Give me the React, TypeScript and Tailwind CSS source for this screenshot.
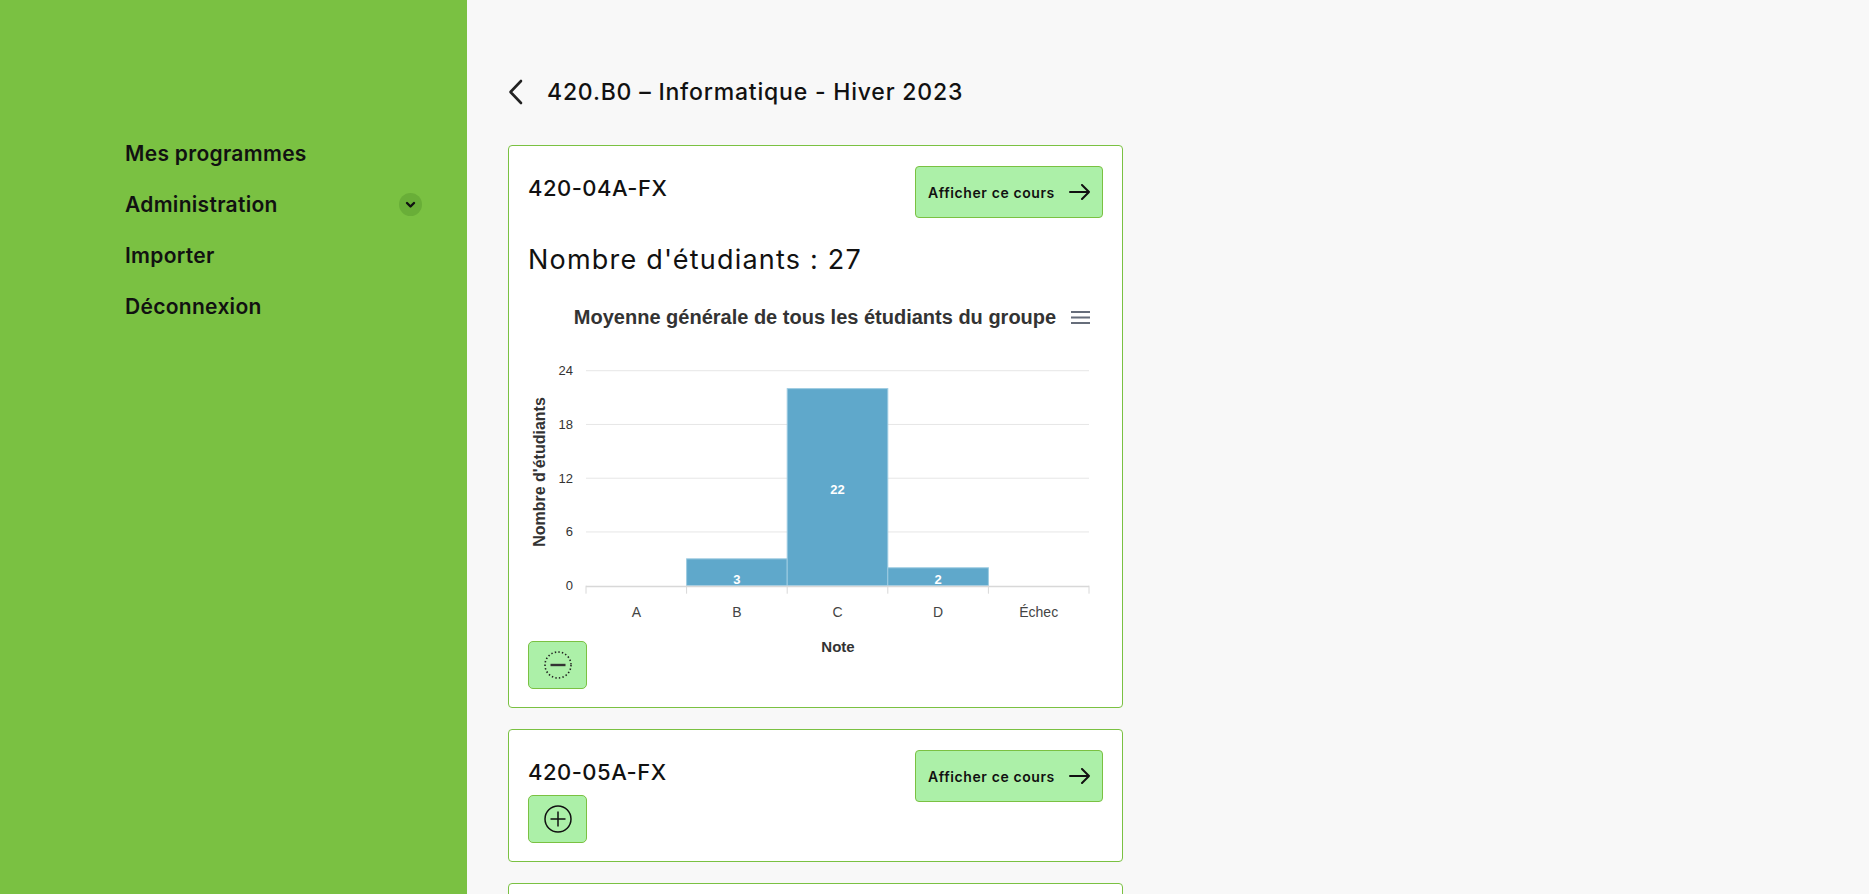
const navItems = [
  { label: "Mes programmes" },
  { label: "Administration", submenu: true },
  { label: "Importer" },
  { label: "Déconnexion" },
];

const grades = [
  { label: "A", value: 0 },
  { label: "B", value: 3 },
  { label: "C", value: 22 },
  { label: "D", value: 2 },
  { label: "Échec", value: 0 },
];

const ArrowRight = () => (
  <svg width="22" height="16" viewBox="0 0 22 16" fill="none" stroke="#111" strokeWidth="2" strokeLinecap="round" strokeLinejoin="round">
    <path d="M1 8h19M13 1l7 7-7 7" />
  </svg>
);

const ViewButton = () => (
  <button className="flex h-[52px] w-[188px] items-center justify-between rounded-[4px] border border-[#7ac142] bg-[#acf0a8] pl-[12px] pr-[11px] text-[14px] font-semibold tracking-[0.6px] text-[#111]">
    <span>Afficher ce cours</span>
    <ArrowRight />
  </button>
);

const ToggleButton = ({ open }: { open: boolean }) => (
  <button className="flex h-[48px] w-[59px] items-center justify-center rounded-[5px] border border-[#7ac142] bg-[#acf0a8]">
    <svg width="30" height="30" viewBox="0 0 30 30" fill="none">
      {open ? (
        <>
          <circle cx="15" cy="15" r="13" stroke="#222" strokeWidth="1.6" strokeDasharray="1.4 2.2" />
          <path d="M7.5 15h15" stroke="#333" strokeWidth="2.4" />
        </>
      ) : (
        <>
          <circle cx="15" cy="15" r="13" stroke="#111" strokeWidth="1.5" />
          <path d="M7.5 15h15M15 7.5v15" stroke="#111" strokeWidth="1.5" />
        </>
      )}
    </svg>
  </button>
);

const GradeChart = () => {
  const left = 58;
  const right = 561;
  const base = 307.7;
  const unit = 8.958;
  const cat = (right - left) / grades.length;
  const ticks = [0, 6, 12, 18, 24];
  const font = "'Liberation Sans', Arial, sans-serif";

  return (
    <svg width="575" height="385" viewBox="0 0 575 385" style={{ fontFamily: font }} className="block">
      <text x="287" y="46" textAnchor="middle" fontSize="20" fontWeight="700" fill="#333">
        Moyenne générale de tous les étudiants du groupe
      </text>
      <g stroke="#666d7a" strokeWidth="2.2">
        <path d="M543 34h19M543 39.5h19M543 45h19" />
      </g>

      {ticks.map((t) => {
        const y = base - t * unit;
        return (
          <g key={t}>
            {t > 0 && <line x1={left} x2={right} y1={y} y2={y} stroke="#e6e6e6" strokeWidth="1" />}
            <text x="45" y={y + 4.5} textAnchor="end" fontSize="13" fill="#333">
              {t}
            </text>
          </g>
        );
      })}

      <text
        transform="translate(17 194) rotate(-90)"
        textAnchor="middle"
        fontSize="16"
        fontWeight="700"
        fill="#333"
      >
        Nombre d'étudiants
      </text>

      {grades.map((g, i) => {
        const x = left + i * cat;
        const h = g.value * unit;
        return (
          <g key={g.label}>
            {g.value > 0 && (
              <>
                <rect x={x} y={base - h} width={cat} height={h} fill="#5fa8cb" stroke="#9ccbe1" strokeWidth="1" />
                <text
                  x={x + cat / 2}
                  y={g.value > 5 ? base - h / 2 + 7 : base - 1.5}
                  textAnchor="middle"
                  fontSize="13"
                  fontWeight="700"
                  fill="#fff"
                >
                  {g.value}
                </text>
              </>
            )}
            <text x={x + cat / 2} y="338.5" textAnchor="middle" fontSize="14" fill="#444">
              {g.label}
            </text>
          </g>
        );
      })}

      <line x1={left} x2={right} y1={base + 0.8} y2={base + 0.8} stroke="#d8d8d8" strokeWidth="1.6" />
      {Array.from({ length: grades.length + 1 }).map((_, i) => (
        <line key={i} x1={left + i * cat} x2={left + i * cat} y1={base} y2={base + 8} stroke="#d8d8d8" strokeWidth="1" />
      ))}

      <text x="310" y="373.5" textAnchor="middle" fontSize="15" fontWeight="700" fill="#333">
        Note
      </text>
    </svg>
  );
};

const CourseCard = ({ code, open }: { code: string; open: boolean }) => (
  <div className="w-[615px] rounded-[4px] border border-[#7ac142] bg-white px-[19px] pt-[20px] pb-[18px]">
    <div className="flex items-start justify-between">
      <div className="flex flex-col">
        <h3 className="flex h-[45px] items-center text-[22px] font-medium tracking-[0.5px] text-[#111]">{code}</h3>
        {!open && <ToggleButton open={false} />}
      </div>
      <ViewButton />
    </div>
    {open && (
      <>
        <p className="mt-[24px] text-[27px] leading-[36px] tracking-[1.2px] text-[#111]">Nombre d'étudiants : 27</p>
        <GradeChart />
        <div className="-mt-[22px]">
          <ToggleButton open={true} />
        </div>
      </>
    )}
  </div>
);

export default function App() {
  return (
    <div className="flex h-screen overflow-hidden font-['Inter',sans-serif]">
      <aside className="w-[467px] shrink-0 bg-[#7ac142] pt-[128px] pl-[125px] pr-[45px]">
        <nav className="flex flex-col">
          {navItems.map((item) => (
            <div key={item.label} className="flex h-[51px] items-center justify-between">
              <span className="text-[21px] font-semibold tracking-[0.3px] text-[#111]">{item.label}</span>
              {item.submenu && (
                <span className="flex h-[23px] w-[23px] items-center justify-center rounded-full bg-[#69ae38]">
                  <svg width="11" height="8" viewBox="0 0 11 8" fill="none" stroke="#111" strokeWidth="2.4" strokeLinecap="round" strokeLinejoin="round">
                    <path d="M2 2l3.5 3.5L9 2" />
                  </svg>
                </span>
              )}
            </div>
          ))}
        </nav>
      </aside>

      <main className="flex-1 bg-[#f8f8f8] pl-[41px] pt-[72px]">
        <div className="flex h-[40px] items-center gap-[24px]">
          <svg width="15" height="26" viewBox="0 0 15 26" fill="none" stroke="#222" strokeWidth="2.6" strokeLinecap="round" strokeLinejoin="round">
            <path d="M13 2L2.5 13L13 24" />
          </svg>
          <h1 className="text-[23px] font-medium tracking-[0.8px] text-[#111]">420.B0 – Informatique - Hiver 2023</h1>
        </div>

        <div className="mt-[33px] flex flex-col gap-[21px]">
          <CourseCard code="420-04A-FX" open={true} />
          <CourseCard code="420-05A-FX" open={false} />
          <div className="h-[133px] w-[615px] shrink-0 rounded-[4px] border border-[#7ac142] bg-white" />
        </div>
      </main>
    </div>
  );
}
